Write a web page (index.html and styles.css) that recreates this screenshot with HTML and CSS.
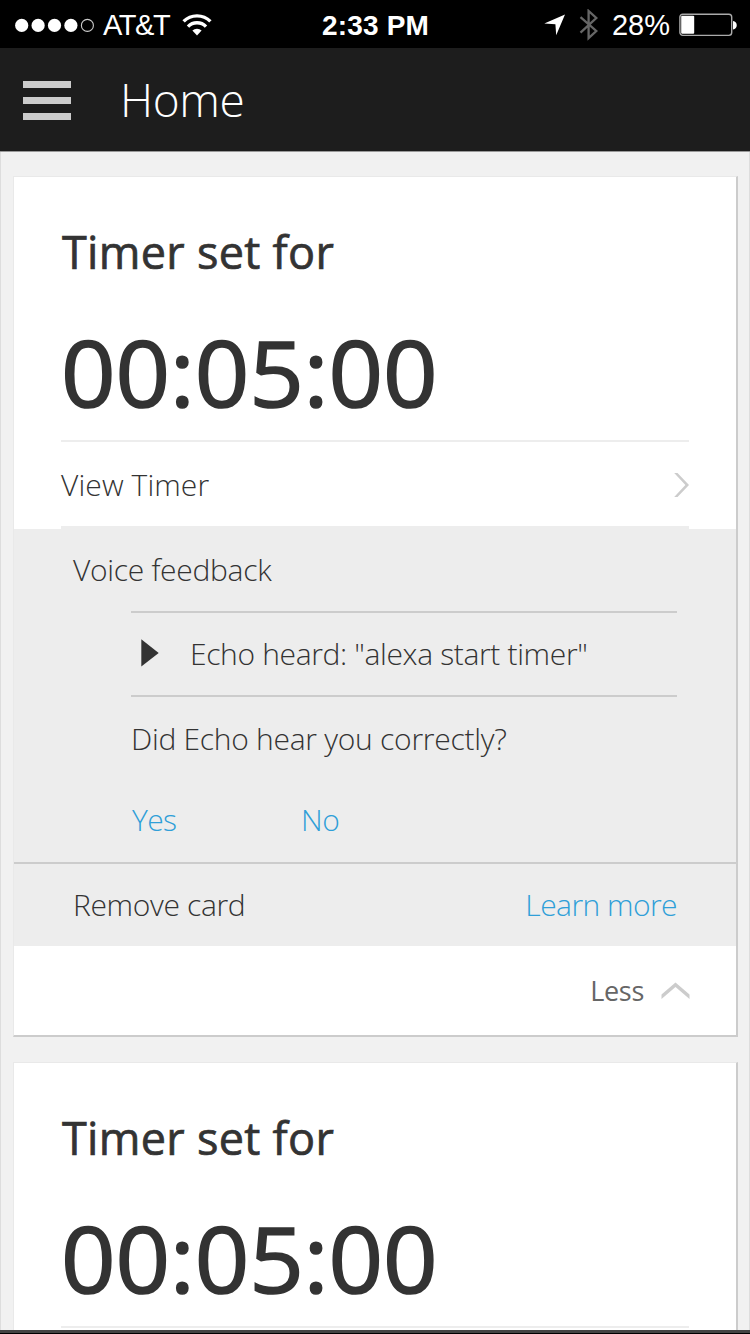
FILE: index.html
```html
<!DOCTYPE html>
<html lang="en">
<head>
    <meta charset="UTF-8">
    <meta name="viewport" content="width=device-width, initial-scale=1.0">
    <title>Home</title>
    <link rel="stylesheet" href="styles.css">
</head>
<body>
    <div class="status-bar">
        <div class="status-left">
            <svg class="signal" width="80" height="16" viewBox="0 0 80 16">
                <g fill="#fff">
                    <circle cx="6.7" cy="8.4" r="6.6"/>
                    <circle cx="23.1" cy="8.4" r="6.6"/>
                    <circle cx="39.5" cy="8.4" r="6.6"/>
                    <circle cx="55.9" cy="8.4" r="6.6"/>
                </g>
                <circle cx="72.4" cy="8.4" r="6" fill="none" stroke="#ccc" stroke-width="1.1"/>
            </svg>
            <span class="carrier">AT&amp;T</span>
            <svg class="wifi" width="30" height="22" viewBox="0 0 30 22">
                <g fill="none" stroke="#fff" stroke-width="3.4">
                    <path d="M1.6 7.4a19 19 0 0 1 26.8 0"/>
                    <path d="M6 12.6a12.6 12.6 0 0 1 18 0"/>
                </g>
                <path d="M15 21.6l-4.6-5a6.6 6.6 0 0 1 9.2 0z" fill="#fff"/>
            </svg>
        </div>
        <span class="time">2:33 PM</span>
        <div class="status-right">
            <svg class="location" width="22" height="22" viewBox="0 0 22 22">
                <path d="M21 0.5L12.2 21.2L11.4 10.2L0.3 9.4z" fill="#fff"/>
            </svg>
            <svg class="bluetooth" width="20" height="32" viewBox="0 0 20 32">
                <path d="M1.5 8.2L17.3 22L9.6 29.2V2L17.3 9L1.5 23.6" fill="none" stroke="#666" stroke-width="2.3"/>
            </svg>
            <span class="percent">28%</span>
            <svg class="battery" width="59" height="24" viewBox="0 0 59 24">
                <rect x="0.9" y="1.2" width="51.8" height="21.2" rx="2.8" fill="none" stroke="#aaa" stroke-width="1.4"/>
                <rect x="2.2" y="2.8" width="13" height="18" rx="1" fill="#fff"/>
                <path d="M54 8c5 0.5 5 8 0 8.4z" fill="#fff"/>
            </svg>
        </div>
    </div>

    <header class="header">
        <div class="menu">
            <span></span>
            <span></span>
            <span></span>
        </div>
        <h1>Home</h1>
    </header>

    <main class="content">
        <div class="card">
            <div class="card-body">
                <h2>Timer set for</h2>
                <div class="clock">00:05:00</div>
                <div class="view-row">
                    <span class="view-timer">View Timer</span>
                    <svg width="15" height="26" viewBox="0 0 15 26">
                        <path d="M0.2 2L3.5 2L15 14L3.5 26L0.2 26L11.4 14z" fill="#ccc"/>
                    </svg>
                </div>
            </div>
            <div class="feedback">
                <div class="feedback-title">Voice feedback</div>
                <div class="feedback-body">
                    <div class="heard">
                        <svg width="18" height="28" viewBox="0 0 18 28">
                            <path d="M0.3 0.3L17.7 14L0.3 27.4z" fill="#333"/>
                        </svg>
                        <span class="heard-text">Echo heard: "alexa start timer"</span>
                    </div>
                    <div class="question">Did Echo hear you correctly?</div>
                    <div class="answers">
                        <a class="yes" href="#">Yes</a>
                        <a class="no" href="#">No</a>
                    </div>
                </div>
            </div>
            <div class="card-actions">
                <span class="remove">Remove card</span>
                <a class="learn" href="#">Learn more</a>
            </div>
            <div class="card-footer">
                <span class="less">Less</span>
                <svg width="29" height="18" viewBox="0 0 29 18">
                    <path d="M0.5 12.5L14.5 0.5L28.5 12.5L28.5 17L14.5 5L0.5 17z" fill="#ccc"/>
                </svg>
            </div>
        </div>

        <div class="card">
            <div class="card-body">
                <h2>Timer set for</h2>
                <div class="clock">00:05:00</div>
                <div class="view-row"></div>
            </div>
        </div>
    </main>
    <div class="bottom-bar"></div>
</body>
</html>
```

FILE: styles.css
```css
* {
    box-sizing: border-box;
}
body {
    margin: 0;
    height: 1334px;
    display: flex;
    flex-direction: column;
    overflow: hidden;
    background: #f1f1f1;
    color: #333;
    font-family: "Open Sans", "Noto Sans", sans-serif;
    font-size: 30px;
    font-weight: 300;
    white-space: nowrap;
}
a {
    color: #2f9fd8;
    text-decoration: none;
}
svg {
    display: block;
    flex-shrink: 0;
}

/* Status bar */
.status-bar {
    flex: 0 0 48px;
    display: grid;
    grid-template-columns: 1fr auto 1fr;
    align-items: center;
    padding: 2px 12px 0 15px;
    background: #000;
    color: #fff;
    font-family: "Liberation Sans", Arial, sans-serif;
    font-size: 29px;
    font-weight: 400;
}
.status-left, .status-right {
    display: flex;
    align-items: center;
}
.status-right {
    justify-content: flex-end;
}
.carrier {
    padding-top: 1px;
    margin-left: 8px;
    letter-spacing: -1.4px;
}
.wifi {
    margin-left: 13px;
}
.time {
    padding-top: 2px;
    margin-right: 2px;
    font-weight: 700;
    font-size: 28px;
    letter-spacing: 0.2px;
}
.bluetooth {
    margin-left: 13px;
}
.percent {
    padding-top: 1px;
    margin-left: 13px;
}
.battery {
    margin-left: 9px;
}

/* Header */
.header {
    flex: 0 0 104px;
    display: flex;
    align-items: center;
    padding-left: 23px;
    background: #1d1d1d;
    border-bottom: 1px solid #999;
    color: #fff;
}
.menu {
    display: flex;
    flex-direction: column;
    gap: 9px;
    margin-top: 2px;
}
.menu span {
    width: 48px;
    height: 7px;
    background: #ccc;
}
.header h1 {
    margin: -1px 0 0 49px;
    font-size: 46px;
    font-weight: 300;
    letter-spacing: -0.4px;
}

/* Cards */
.content {
    flex: 1;
    min-height: 0;
    overflow: hidden;
    padding: 24px 11px 0 12px;
    border-left: 1px solid #ddd;
    border-right: 1px solid #ddd;
}
.card {
    margin-bottom: 25px;
    background: #fff;
    border: 1px solid #e9e9e9;
    border-right: 2px solid #ccc;
    border-bottom: 2px solid #ccc;
}
.card-body {
    padding: 41px 47px 0;
}
.card h2 {
    margin: 0 0 0 1px;
    font-size: 45px;
    font-weight: 400;
    line-height: 68px;
    letter-spacing: 0.3px;
    -webkit-text-stroke: 0.7px #333;
}
.clock {
    height: 154px;
    font-size: 91px;
    font-weight: 400;
    line-height: 172px;
    letter-spacing: -0.2px;
    transform: scaleX(1.05);
    transform-origin: left;
    -webkit-text-stroke: 1.6px #333;
}
.view-row {
    display: flex;
    align-items: center;
    justify-content: space-between;
    height: 89px;
    border-top: 2px solid #ededed;
    border-bottom: 3px solid #ededed;
}
.view-timer {
    letter-spacing: 0.1px;
}

/* Voice feedback */
.feedback {
    height: 333px;
    padding: 0 59px;
    background: #ededed;
}
.feedback-title {
    height: 82px;
    line-height: 82px;
    letter-spacing: -0.3px;
}
.feedback-body {
    margin-left: 58px;
}
.heard {
    display: flex;
    align-items: center;
    height: 86px;
    padding-left: 10px;
    border-top: 2px solid #ccc;
    border-bottom: 2px solid #ccc;
}
.heard svg {
    margin-top: -2px;
}
.heard-text {
    margin: -2px 0 0 31px;
    letter-spacing: -0.35px;
}
.question {
    height: 83px;
    line-height: 83px;
    letter-spacing: -0.27px;
}
.answers {
    display: grid;
    grid-template-columns: 170px auto;
    line-height: 80px;
}
.yes {
    padding-left: 1px;
    letter-spacing: -0.6px;
}
.no {
    letter-spacing: -0.5px;
}
.card-actions {
    display: flex;
    justify-content: space-between;
    height: 84px;
    padding: 0 59px;
    background: #ededed;
    border-top: 2px solid #ccc;
    line-height: 82px;
}
.remove {
    letter-spacing: -0.35px;
}
.learn {
    letter-spacing: -0.55px;
}
.card-footer {
    display: flex;
    align-items: center;
    justify-content: flex-end;
    gap: 17px;
    height: 89px;
    padding-right: 46px;
    color: #666;
    font-size: 27px;
    font-weight: 400;
}
.less {
    letter-spacing: -0.3px;
}

.bottom-bar {
    flex: 0 0 4px;
    background: #444;
    border-bottom: 1px solid #000;
}
```
